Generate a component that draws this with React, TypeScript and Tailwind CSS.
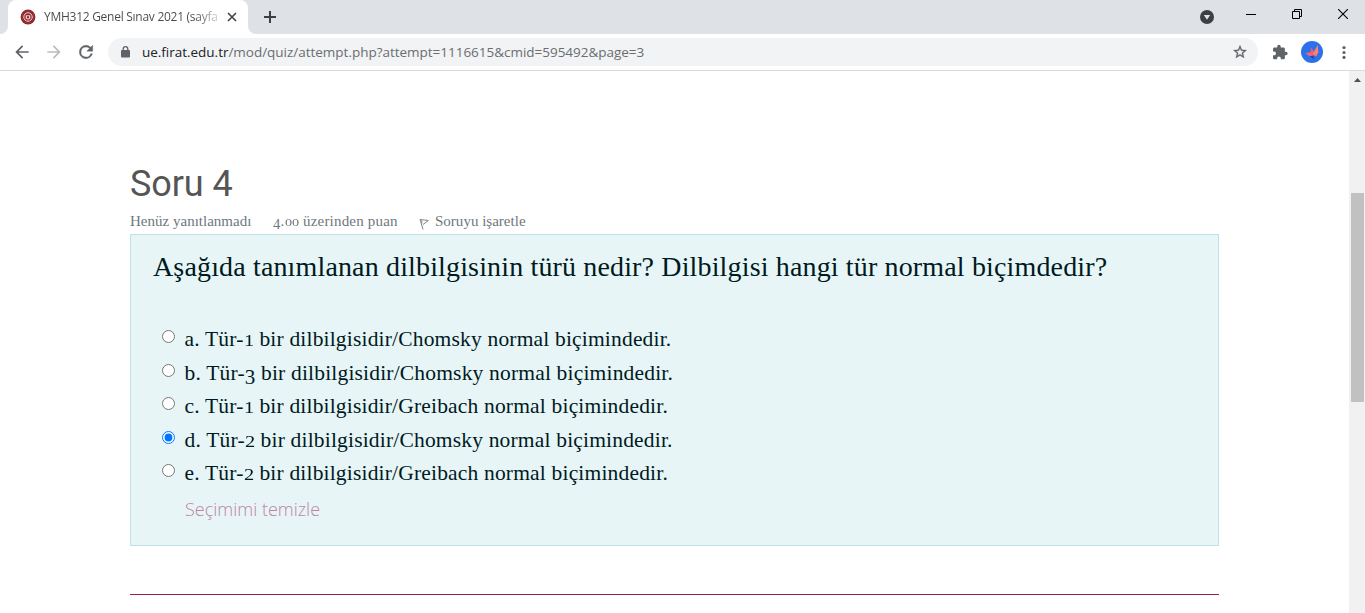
import { Fragment, useState } from "react";

const serif = "font-['Georgia','Liberation_Serif',serif]";
const ui = "font-['Segoe_UI','Open_Sans',sans-serif]";

/** Lowers and shrinks figures so that they sit like text figures in running text. */
function TextFigures({ children }: { children: string }) {
  return (
    <>
      {children.split(/(\d+)/).map((part, i) => {
        if (!/^\d/.test(part)) return <Fragment key={i}>{part}</Fragment>;
        return part.split("").map((d, j) => (
          <span
            key={`${i}-${j}`}
            className={
              /[3-9]/.test(d)
                ? "relative top-[0.19em] text-[0.98em] leading-none"
                : "inline-block origin-bottom-left scale-x-[1.25] pr-[0.12em] text-[0.76em] leading-none"
            }
          >
            {d}
          </span>
        ));
      })}
    </>
  );
}

function TabStrip() {
  return (
    <div className="flex h-[34px] shrink-0 bg-[#dee1e6]">
      <div className="flex w-2 items-end bg-white">
        <div className="h-full w-2 rounded-br-lg bg-[#dee1e6]" />
      </div>
      <div className="w-[240px] bg-[#dee1e6]">
        <div className="flex h-[34px] items-center rounded-t-lg bg-white pl-3">
          <svg className="size-4 shrink-0" viewBox="0 0 16 16">
            <circle cx="8" cy="8" r="7.4" fill="#8d2025" />
            <circle cx="8" cy="8" r="6" fill="none" stroke="#a85558" strokeWidth="1" strokeDasharray="1 1" />
            <circle cx="8" cy="8" r="4.2" fill="#8d2025" stroke="#f3e4e4" strokeWidth="1" />
            <path d="M5.7 6.3h4.6v3.2l-2.3 1.3-2.3-1.3z" fill="#ead2d2" />
            <path d="M7 7.2h2v2H7z" fill="#8d2025" />
          </svg>
          <div className={`${ui} ml-2 w-[175px] shrink-0 bg-linear-to-r from-[#45494d] from-86% to-[#45494d]/20 bg-clip-text text-[12px] tracking-[-0.27px] whitespace-nowrap text-transparent`}>
            YMH312 Genel Sınav 2021 (sayfa
          </div>
          <svg className="ml-2 size-[10px] shrink-0" viewBox="0 0 10 10" stroke="#45494d" strokeWidth="1.7">
            <path d="M1 1l8 8M9 1L1 9" />
          </svg>
        </div>
      </div>
      <div className="flex w-2 bg-white">
        <div className="h-full w-2 rounded-bl-lg bg-[#dee1e6]" />
      </div>
      <svg className="mt-[11px] ml-2 size-3" viewBox="0 0 12 12" stroke="#3c4043" strokeWidth="2">
        <path d="M6 0v12M0 6h12" />
      </svg>
      <div className="ml-auto flex">
        <svg className="mt-[10px] mr-8 size-[14px]" viewBox="0 0 14 14">
          <circle cx="7" cy="7" r="7" fill="#3c4043" />
          <path d="M3.8 5h6.4L7 9.8z" fill="#dee1e6" />
        </svg>
        <svg className="mt-[14px] mr-9 h-px w-[10px]" viewBox="0 0 10 1">
          <path d="M0 0h10v1H0z" />
        </svg>
        <svg className="mt-[9px] mr-9 size-[10px]" viewBox="0 0 10 10" fill="none" stroke="#000">
          <path d="M.5 2.5h7v7h-7zM2.5 2.5v-2h7v7h-2" />
        </svg>
        <svg className="mt-[9px] mr-[17px] size-[10px]" viewBox="0 0 10 10" stroke="#000" strokeWidth="1.1">
          <path d="M0 0l10 10M10 0L0 10" />
        </svg>
      </div>
    </div>
  );
}

function Toolbar() {
  return (
    <div className="flex h-[37px] shrink-0 items-center border-b border-[#d8dadd] bg-white pl-[12px]">
      <svg className="size-5" viewBox="0 0 24 24" fill="#5f6368">
        <path d="M20 11H7.83l5.59-5.59L12 4l-8 8 8 8 1.41-1.41L7.83 13H20v-2z" />
      </svg>
      <svg className="ml-3 size-5" viewBox="0 0 24 24" fill="#babcbe">
        <path d="M12 4l-1.41 1.41L16.17 11H4v2h12.17l-5.58 5.59L12 20l8-8z" />
      </svg>
      <svg className="ml-3 size-5" viewBox="0 0 24 24" fill="#5f6368">
        <path d="M17.65 6.35A7.96 7.96 0 0 0 12 4a8 8 0 1 0 7.73 10h-2.08A6 6 0 1 1 12 6c1.66 0 3.14.69 4.22 1.78L13 11h7V4l-2.35 2.35z" stroke="#5f6368" strokeWidth=".5" />
      </svg>
      <div className="ml-3 flex h-7 w-[1150px] items-center rounded-full bg-[#f1f3f4] pr-[10px] pl-[13px]">
        <svg className="h-3 w-[9px]" viewBox="0 0 9 12">
          <rect y="4" width="9" height="7.5" rx="1" fill="#5f6368" />
          <path d="M2.2 4.5V3a2.3 2.3 0 0 1 4.6 0v1.5" fill="none" stroke="#5f6368" strokeWidth="1.3" />
        </svg>
        <div className={`${ui} ml-3 pt-px text-[13.5px] tracking-[-0.02px] whitespace-nowrap text-[#6a6e72]`}>
          <span className="text-[#202124]">ue.firat.edu.tr</span>/mod/quiz/attempt.php?attempt=1116615&amp;cmid=595492&amp;page=3
        </div>
        <svg className="ml-auto size-4" viewBox="0 0 24 24" fill="#5f6368">
          <path d="M22 9.24l-7.19-.62L12 2 9.19 8.63 2 9.24l5.46 4.73L5.82 21 12 17.27 18.18 21l-1.63-7.03L22 9.24zM12 15.4l-3.76 2.27 1-4.28-3.32-2.88 4.38-.38L12 6.1l1.71 4.04 4.38.38-3.32 2.88 1 4.28L12 15.4z" stroke="#5f6368" strokeWidth=".5" />
        </svg>
      </div>
      <svg className="ml-[14px] size-[16px]" viewBox="1 0 22 23" fill="#5f6368">
        <path d="M20.5 11H19V7c0-1.1-.9-2-2-2h-4V3.5a2.5 2.5 0 0 0-5 0V5H4c-1.1 0-1.99.9-1.99 2v3.8H3.5c1.49 0 2.7 1.21 2.7 2.7s-1.21 2.7-2.7 2.7H2V20c0 1.1.9 2 2 2h3.8v-1.5c0-1.49 1.21-2.7 2.7-2.7s2.7 1.21 2.7 2.7V22H17c1.1 0 2-.9 2-2v-4h1.5a2.5 2.5 0 0 0 0-5z" />
      </svg>
      <svg className="ml-[13px] size-[22px]" viewBox="0 0 22 22">
        <circle cx="11" cy="11" r="11" fill="#2c71ea" />
        <path d="M4 12.4l6.5-1.6 2 3.7-3.5.8z" fill="#e8687c" />
        <path d="M10 6.2l3.2 4.8-.6 3.6-3-3z" fill="#f0606a" />
        <path d="M16.8 3.8l.6 8.2-3.4 2.4-2.2-1.6z" fill="#ff7f70" />
        <path d="M11 13.8l5.6-1.4-1.2 3.2-1.4-.8z" fill="#ff7468" />
        <path d="M9 15.3l4 2.9-.6-3.6z" fill="#263fa9" />
      </svg>
      <svg className="ml-[19px] h-[13px] w-[4px]" viewBox="0 0 4 13" fill="#5f6368">
        <circle cx="2" cy="1.6" r="1.6" />
        <circle cx="2" cy="6.5" r="1.6" />
        <circle cx="2" cy="11.4" r="1.6" />
      </svg>
    </div>
  );
}

const answers = [
  { key: "a", text: "Tür-1 bir dilbilgisidir/Chomsky normal biçimindedir." },
  { key: "b", text: "Tür-3 bir dilbilgisidir/Chomsky normal biçimindedir." },
  { key: "c", text: "Tür-1 bir dilbilgisidir/Greibach normal biçimindedir." },
  { key: "d", text: "Tür-2 bir dilbilgisidir/Chomsky normal biçimindedir." },
  { key: "e", text: "Tür-2 bir dilbilgisidir/Greibach normal biçimindedir." },
];

function Question() {
  const [selected, setSelected] = useState("d");
  return (
    <main className="flex-1 overflow-hidden pl-[130px]">
      <h3 className="mt-[92px] font-['Roboto',sans-serif] text-[36px] leading-[43px] tracking-[-0.1px] text-[#555]">Soru 4</h3>
      <div className={`${serif} mt-[5px] mb-[2px] flex h-[21px] items-center text-[15px] tracking-[0.01px] text-[#6f777e]`}>
        <span className="w-[143px]">Henüz yanıtlanmadı</span>
        <span className="w-[146px] tracking-[0.2px]">
          <TextFigures>4.00 üzerinden puan</TextFigures>
        </span>
        <svg className="mt-1 mr-[6px] h-3 w-[10px]" viewBox="0 0 10 12" fill="none" stroke="#7d8489">
          <path d="M1 1.2l3 10.3M1.2 1.5l8.2 1-5.4 4M2.8 2.4v3.2" />
        </svg>
        <span>Soruyu işaretle</span>
      </div>
      <section className={`${serif} h-[312px] w-[1089px] border border-[#bce4e8] bg-[#e7f5f7] pl-[22px] text-[#001a1e]`}>
        <p className="mt-[14px] text-[28px] leading-9 tracking-[0.15px] whitespace-nowrap">
          Aşağıda tanımlanan dilbilgisinin türü nedir? Dilbilgisi hangi tür normal biçimdedir?
        </p>
        <div className="mt-[38px]">
          {answers.map((a) => (
            <label key={a.key} className="flex h-[33.5px] items-start pl-[9.4px]">
              <input
                type="radio"
                name="answer"
                checked={selected === a.key}
                onChange={() => setSelected(a.key)}
                className="mt-[7px] size-[13px]"
              />
              <span className="ml-[9.2px] text-[21.5px] leading-[32px] tracking-[0.18px] whitespace-nowrap">
                {a.key}. <TextFigures>{a.text}</TextFigures>
              </span>
            </label>
          ))}
        </div>
        <button
          onClick={() => setSelected("")}
          className={`${ui} mt-[6px] ml-8 block text-[18px] leading-6 font-light whitespace-nowrap text-[#bd86a0]`}
        >
          Seçimimi temizle
        </button>
      </section>
      <hr className="mt-12 w-[1089px] border-0 border-t border-[#a0204d]" />
    </main>
  );
}

export default function App() {
  return (
    <div className="flex h-[613px] w-[1365px] flex-col overflow-hidden bg-white">
      <TabStrip />
      <Toolbar />
      <div className="flex min-h-0 flex-1">
        <Question />
        <div className="w-4 shrink-0 bg-[#f1f1f1] px-[2px] pr-px">
          <svg className="mt-[7px] ml-[3px] h-[5px] w-[7px]" viewBox="0 0 7 5">
            <path d="M3.5 0L7 4H0z" fill="#505050" />
          </svg>
          <div className="mt-[110px] h-[209px] bg-[#c1c1c1]" />
        </div>
      </div>
    </div>
  );
}
